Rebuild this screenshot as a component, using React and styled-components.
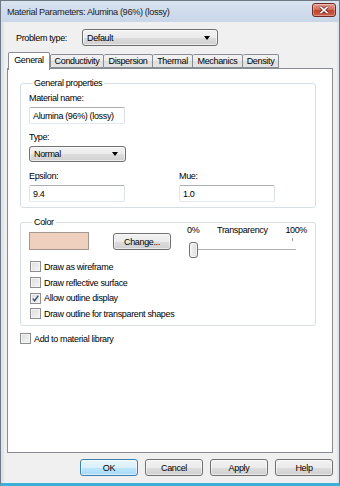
import React from "react";
import styled, { createGlobalStyle } from "styled-components";

const GlobalStyle = createGlobalStyle`
  html, body {
    margin: 0;
    padding: 0;
    background: #ffffff;
  }
  body {
    font-family: "Liberation Sans", Arial, sans-serif;
    font-size: 9px;
    letter-spacing: -0.35px;
    color: #000;
  }
  * {
    box-sizing: border-box;
  }
`;

const Window = styled.div`
  width: 340px;
  height: 486px;
  display: flex;
  flex-direction: column;
  border: 1px solid #6f7986;
  border-bottom: 3px solid #3bb0d9;
  background: #d3deec;
`;

const TitleBar = styled.div`
  height: 21px;
  flex: none;
  display: flex;
  align-items: center;
  justify-content: space-between;
  padding: 0 3px 0 6px;
  background: linear-gradient(#d9e3f0, #c8d6e8);
  color: #1b1b1b;
  font-size: 9.2px;
`;

const CloseButton = styled.div`
  width: 24px;
  height: 14px;
  margin-top: -3px;
  border: 1px solid #6b2b22;
  border-radius: 3px;
  background: linear-gradient(#e59a8c, #d16a57 48%, #c2432f 52%, #cc5e48);
  display: flex;
  align-items: center;
  justify-content: center;
  box-shadow: inset 0 0 0 1px rgba(255, 255, 255, 0.35);
`;

const Frame = styled.div`
  flex: 1;
  display: flex;
  padding: 0 3px;
  background: #dbe4ef;
`;

const Content = styled.div`
  flex: 1;
  display: flex;
  flex-direction: column;
  padding: 7px 4px 7px 3px;
  background: #f0f0f0;
`;

const TopRow = styled.div`
  display: flex;
  align-items: center;
  height: 17px;
  padding-left: 9px;
`;

const RowLabel = styled.span`
  width: 66px;
`;

const Select = styled.div`
  width: ${({ $w }) => $w}px;
  height: ${({ $h }) => $h || 17}px;
  margin-top: ${({ $top }) => $top || 0}px;
  display: flex;
  align-items: center;
  justify-content: space-between;
  padding: 0 7px 0 4px;
  border: 1px solid #707070;
  border-radius: 3px;
  background: linear-gradient(#f2f2f2 0%, #ebebeb 50%, #dddddd 51%, #cfcfcf 100%);
  box-shadow: inset 0 0 0 1px rgba(255, 255, 255, 0.6);
`;

const Arrow = styled.span`
  width: 0;
  height: 0;
  border-left: 3px solid transparent;
  border-right: 3px solid transparent;
  border-top: 4px solid #000;
`;

const TabRow = styled.div`
  display: flex;
  align-items: flex-end;
  height: 16px;
  margin-top: 6px;
  padding-left: 1px;
  position: relative;
  z-index: 1;
`;

const Tab = styled.div`
  width: ${({ $w }) => $w}px;
  height: ${({ $active }) => ($active ? 18 : 14)}px;
  margin-bottom: ${({ $active }) => ($active ? -2 : 0)}px;
  padding-bottom: ${({ $active }) => ($active ? 3 : 0)}px;
  display: flex;
  align-items: center;
  justify-content: center;
  border: 1px solid #898c95;
  border-bottom: ${({ $active }) => ($active ? "none" : "1px solid #898c95")};
  border-left-width: ${({ $first }) => ($first ? 1 : 0)}px;
  border-radius: 2px 2px 0 0;
  background: ${({ $active }) =>
    $active ? "#ffffff" : "linear-gradient(#f3f3f3, #ebebeb 50%, #dedede 51%, #e5e5e5)"};
`;

const Panel = styled.div`
  height: 385px;
  flex: none;
  display: flex;
  flex-direction: column;
  border: 1px solid #898c95;
  background: #ffffff;
  padding: 8px 16px 0 12px;
`;

const Group = styled.fieldset`
  margin: ${({ $top }) => $top || 0}px 0 0 0;
  padding: 3px 8px ${({ $bottom }) => $bottom}px 8px;
  border: 1px solid #d5dfe5;
  border-radius: 3px;
  min-width: 0;
`;

const Legend = styled.legend`
  padding: 0 2px;
  margin-left: 3px;
  line-height: 12px;
`;

const Label = styled.div`
  line-height: 12px;
  margin-top: ${({ $top }) => $top || 0}px;
`;

const TextBox = styled.div`
  width: 96px;
  height: 17px;
  margin-top: 3px;
  display: flex;
  align-items: center;
  padding-left: 3px;
  border: 1px solid #abadb3;
  border-left-color: #e2e3ea;
  border-right-color: #dbdfe6;
  border-bottom-color: #e3e9ef;
  border-radius: 2px;
  background: #ffffff;
`;

const Columns = styled.div`
  display: flex;
  margin-top: 8px;
`;

const Column = styled.div`
  width: ${({ $w }) => $w}px;
  display: flex;
  flex-direction: column;
`;

const ColorRow = styled.div`
  display: flex;
  align-items: flex-start;
  margin-top: 1px;
`;

const Swatch = styled.div`
  width: 60px;
  height: 18px;
  background: #efcfbe;
  border: 1px solid #a39890;
`;

const Button = styled.div`
  width: 58px;
  height: 17px;
  margin: ${({ $m }) => $m || "0"};
  display: flex;
  align-items: center;
  justify-content: center;
  border: 1px solid ${({ $default }) => ($default ? "#3c7fb1" : "#707070")};
  border-radius: 3px;
  background: ${({ $default }) =>
    $default
      ? "linear-gradient(#eaf6fd 0%, #d9f0fc 50%, #bee6fd 51%, #a7d9f5 100%)"
      : "linear-gradient(#f2f2f2 0%, #ebebeb 50%, #dddddd 51%, #cfcfcf 100%)"};
  box-shadow: inset 0 0 0 1px rgba(255, 255, 255, 0.55);
`;

const SliderBlock = styled.div`
  width: 120px;
  margin: -7px 0 0 16px;
  display: flex;
  flex-direction: column;
`;

const SliderLabels = styled.div`
  display: flex;
  justify-content: space-between;
  line-height: 10px;
`;

const Slider = styled.div`
  position: relative;
  width: 107px;
  height: 17px;
  margin: 7px 0 0 2px;

  &::before {
    content: "";
    position: absolute;
    left: 0;
    right: 0;
    top: 7px;
    height: 1px;
    background: #b0b0b0;
    box-shadow: 0 1px 0 #ffffff;
  }

  &::after {
    content: "";
    position: absolute;
    left: 103px;
    top: -4px;
    width: 1px;
    height: 3px;
    background: #a0a0a0;
  }
`;

const Thumb = styled.div`
  position: absolute;
  left: 0;
  top: 0;
  width: 9px;
  height: 16px;
  border: 1px solid #707070;
  border-radius: 3px;
  background: linear-gradient(90deg, #f4f4f4, #dcdcdc);
  box-shadow: inset 0 0 0 1px rgba(255, 255, 255, 0.7);
`;

const CheckList = styled.div`
  display: flex;
  flex-direction: column;
  padding-left: ${({ $indent }) => $indent || 0}px;
  margin-top: ${({ $top }) => $top || 0}px;
`;

const CheckRow = styled.div`
  display: flex;
  align-items: center;
  gap: 3px;
  height: 15.7px;
`;

const Box = styled.span`
  width: 11px;
  height: 11px;
  display: flex;
  align-items: center;
  justify-content: center;
  border: 1px solid #8e8f8f;
  background: linear-gradient(135deg, #dcdcdc, #f6f6f6);
  box-shadow: inset 0 0 0 1px #f4f4f4;
`;

const ButtonRow = styled.div`
  display: flex;
  justify-content: flex-end;
  gap: 7px;
  margin-top: 6px;
`;

const Check = ({ label, checked }) => (
  <CheckRow>
    <Box>
      {checked && (
        <svg width="7" height="7" viewBox="0 0 7 7">
          <path d="M0.8 3.6 L2.6 5.8 L6.3 0.6" fill="none" stroke="#3b4a6b" strokeWidth="1.4" />
        </svg>
      )}
    </Box>
    <span>{label}</span>
  </CheckRow>
);

const tabs = [
  { name: "General", w: 42 },
  { name: "Conductivity", w: 54 },
  { name: "Dispersion", w: 49 },
  { name: "Thermal", w: 40 },
  { name: "Mechanics", w: 50 },
  { name: "Density", w: 36 },
];

export default function App() {
  return (
    <>
      <GlobalStyle />
      <Window>
        <TitleBar>
          <span>Material Parameters: Alumina (96%) (lossy)</span>
          <CloseButton>
            <svg width="10" height="8" viewBox="0 0 10 8">
              <path d="M1.5 0.8 L8.5 7.2 M8.5 0.8 L1.5 7.2" stroke="#5a1f17" strokeWidth="3" />
              <path d="M1.5 0.8 L8.5 7.2 M8.5 0.8 L1.5 7.2" stroke="#ffffff" strokeWidth="1.6" />
            </svg>
          </CloseButton>
        </TitleBar>
        <Frame>
          <Content>
            <TopRow>
              <RowLabel>Problem type:</RowLabel>
              <Select $w={136}>
                <span>Default</span>
                <Arrow />
              </Select>
            </TopRow>

            <TabRow>
              {tabs.map((t, i) => (
                <Tab key={t.name} $w={t.w} $active={i === 0} $first={i < 2}>
                  {t.name}
                </Tab>
              ))}
            </TabRow>

            <Panel>
              <Group $bottom={5}>
                <Legend>General properties</Legend>
                <Label>Material name:</Label>
                <TextBox>Alumina (96%) (lossy)</TextBox>
                <Label $top={7}>Type:</Label>
                <Select $w={97} $h={16} $top={3}>
                  <span>Normal</span>
                  <Arrow />
                </Select>
                <Columns>
                  <Column $w={150}>
                    <Label>Epsilon:</Label>
                    <TextBox>9.4</TextBox>
                  </Column>
                  <Column $w={100}>
                    <Label>Mue:</Label>
                    <TextBox>1.0</TextBox>
                  </Column>
                </Columns>
              </Group>

              <Group $top={8} $bottom={3}>
                <Legend>Color</Legend>
                <ColorRow>
                  <Swatch />
                  <Button $m="1px 0 0 24px">Change...</Button>
                  <SliderBlock>
                    <SliderLabels>
                      <span>0%</span>
                      <span>Transparency</span>
                      <span>100%</span>
                    </SliderLabels>
                    <Slider>
                      <Thumb />
                    </Slider>
                  </SliderBlock>
                </ColorRow>
                <CheckList $indent={1}>
                  <Check label="Draw as wireframe" />
                  <Check label="Draw reflective surface" />
                  <Check label="Allow outline display" checked />
                  <Check label="Draw outline for transparent shapes" />
                </CheckList>
              </Group>

              <CheckList $top={5}>
                <Check label="Add to material library" />
              </CheckList>
            </Panel>

            <ButtonRow>
              <Button $default>OK</Button>
              <Button>Cancel</Button>
              <Button>Apply</Button>
              <Button>Help</Button>
            </ButtonRow>
          </Content>
        </Frame>
      </Window>
    </>
  );
}
